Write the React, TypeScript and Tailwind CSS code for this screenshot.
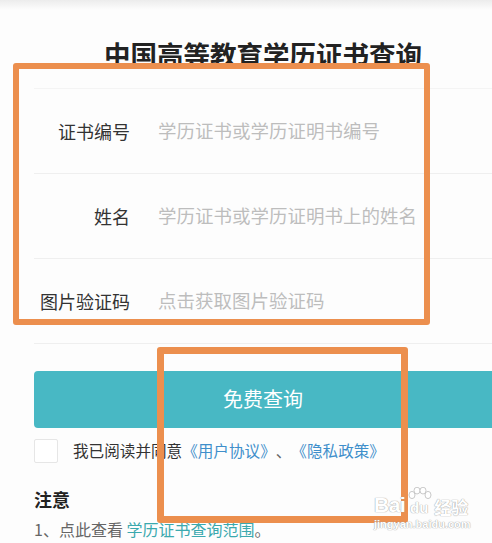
import React from "react";

const font = { fontFamily: '"Noto Sans CJK SC", "Noto Sans", sans-serif' };

function Row({ label, placeholder }: { label: string; placeholder: string }) {
  return (
    <div className="flex h-[85px] items-center border-b border-[#efefef]">
      <div className="w-[96px] shrink-0 text-right text-[18px] leading-none text-[#333]">{label}</div>
      <div className="ml-[28px] whitespace-nowrap text-[18.5px] leading-none text-[#bdbdbd]">{placeholder}</div>
    </div>
  );
}

export default function App() {
  return (
    <div className="relative h-[543px] w-[492px] overflow-hidden bg-[#fdfdfd] [text-spacing-trim:space-all]" style={font}>
      <div className="h-[10px] bg-gradient-to-b from-[#ececec] to-[#fdfdfd]" />
      <div className="pl-[34px]">
        <div className="mt-[31px] text-center text-[26.5px] font-bold leading-none text-[#222]">
          中国高等教育学历证书查询
        </div>
        <div className="mt-[20px] border-t border-[#f4f4f4]">
          <Row label="证书编号" placeholder="学历证书或学历证明书编号" />
          <Row label="姓名" placeholder="学历证书或学历证明书上的姓名" />
          <Row label="图片验证码" placeholder="点击获取图片验证码" />
        </div>
        <div className="mt-[27px] flex h-[57px] items-center justify-center rounded-l-[4px] bg-[#48b8c4] text-[20px] leading-none text-white">
          免费查询
        </div>
        <div className="mt-[11px] flex items-center">
          <div className="h-[24px] w-[24px] rounded-[2px] border border-[#e6e6e6] bg-white" />
          <div className="ml-[15px] whitespace-nowrap text-[15.6px] leading-none text-[#333]">
            我已阅读并同意<span className="text-[#3f8fcb]">《用户协议》</span>
            <span className="text-[#666]">、</span>
            <span className="text-[#3f8fcb]">《隐私政策》</span>
          </div>
        </div>
        <div className="mt-[27px] text-[18px] font-bold leading-none text-[#222]">注意</div>
        <div className="mt-[13px] whitespace-nowrap text-[16px] leading-none text-[#666]">
          1、点此查看 <span className="text-[#3ba9ae]">学历证书查询范围</span>。
        </div>
      </div>

      {/* annotation boxes */}
      <div className="absolute left-[13px] top-[63px] h-[262px] w-[417px] rounded-[3px] border-[6px] border-[#ec8f4e]" />
      <div className="absolute left-[157px] top-[347px] h-[176px] w-[251px] rounded-[3px] border-[7px] border-[#ec8f4e]" />

      {/* watermark */}
      <div className="absolute left-[374px] top-[487px] flex flex-col items-start text-white [text-shadow:0_0_1px_#a5a5a5,0_0_1px_#a5a5a5]">
        <div className="flex items-end" style={{ fontFamily: '"Liberation Sans", sans-serif' }}>
          <span className="text-[21px] font-bold leading-none tracking-[-0.5px]">Bai</span>
          <span className="relative ml-[1px] flex h-[28px] w-[26px] items-end justify-center">
            <svg className="absolute left-0 top-0" width="26" height="20" viewBox="0 0 26 20">
              <g fill="#fff" stroke="#bbbbbb" strokeWidth="0.8">
                <ellipse cx="6" cy="8" rx="3" ry="3.6" />
                <ellipse cx="11" cy="3.6" rx="3" ry="3.4" />
                <ellipse cx="17" cy="3.6" rx="3" ry="3.4" />
                <ellipse cx="22" cy="8" rx="3" ry="3.6" />
              </g>
            </svg>
            <span className="relative text-[15px] font-bold leading-none">du</span>
          </span>
          <span className="ml-[2px] text-[17px] font-bold leading-none" style={font}>经验</span>
        </div>
        <div className="mt-[4px] text-[11px] font-bold leading-none" style={{ fontFamily: '"Liberation Sans", sans-serif' }}>
          jingyan.baidu.com
        </div>
      </div>
    </div>
  );
}
